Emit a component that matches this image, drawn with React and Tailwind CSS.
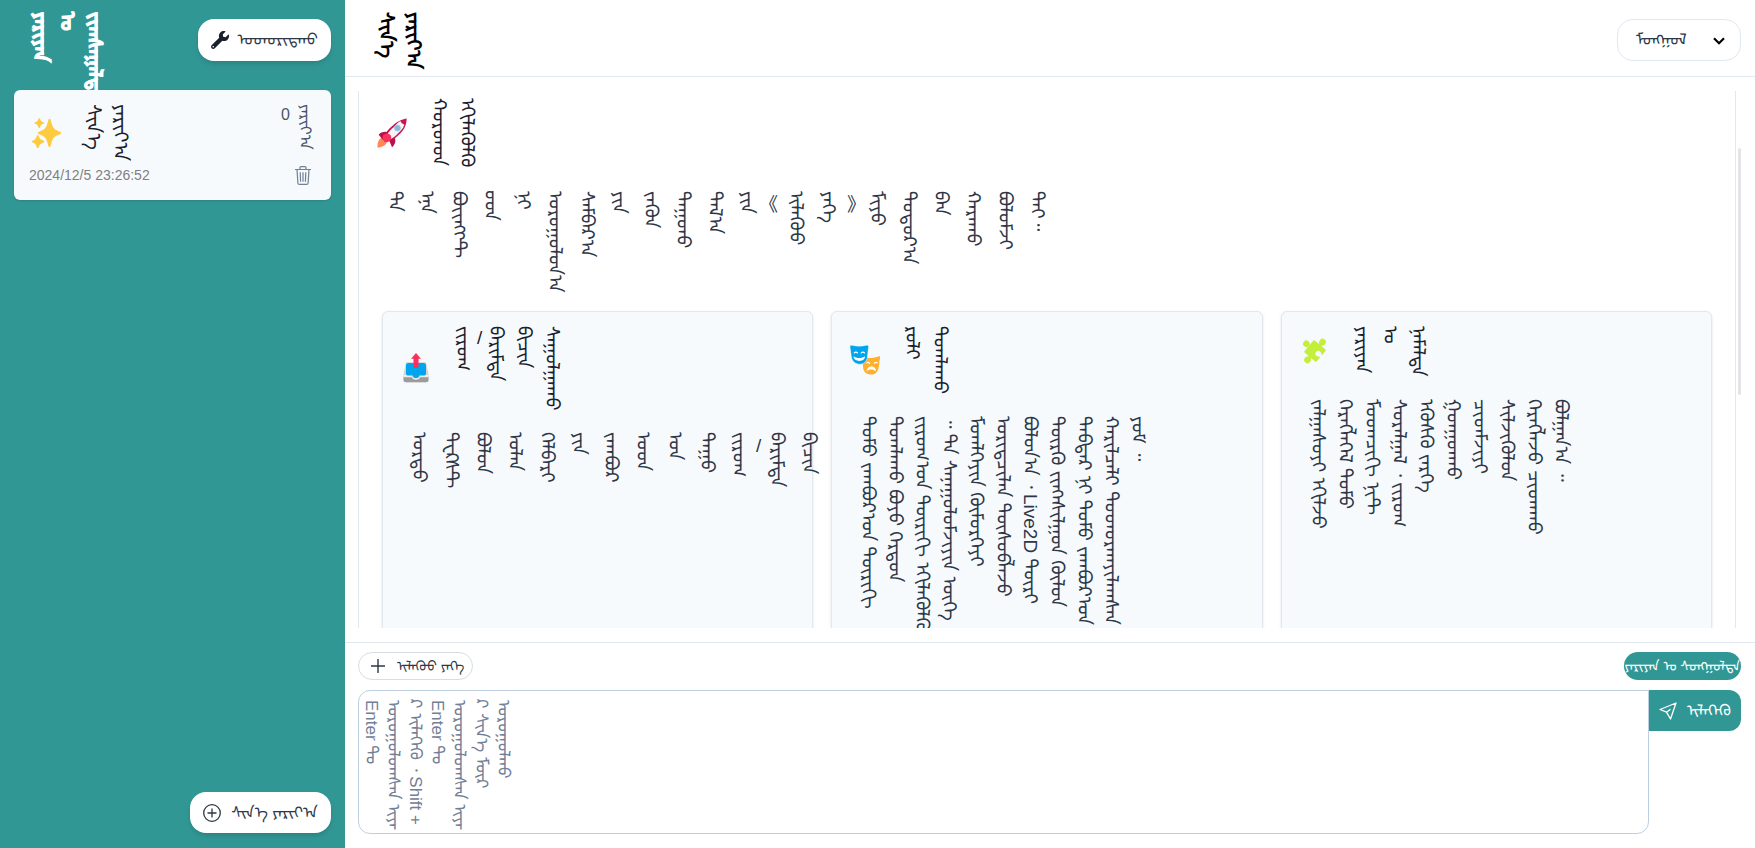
import React from "react";
import { FaWrench } from "react-icons/fa";

const VERTICAL = "[writing-mode:vertical-lr] whitespace-nowrap";

function wordClass(word) {
  if (/[\u1800-\u18af]/.test(word)) return VERTICAL;
  if (word === "《") return "flex w-3 justify-end";
  if (word === "》") return "flex w-3 justify-start";
  if (word === "/") return "-mx-[2px] font-normal";
  return "font-normal";
}

function Words({ text, gap = "gap-[5px]", className = "" }) {
  return (
    <span className={`flex items-start whitespace-nowrap ${gap} ${className}`}>
      {text.split(" ").map((word, i) => (
        <span key={i} className={wordClass(word)}>
          {word}
        </span>
      ))}
    </span>
  );
}

function Columns({ lines }) {
  return (
    <p className="text-[19px] leading-[27px] whitespace-pre [writing-mode:vertical-lr]">
      {lines.join("\n")}
    </p>
  );
}

function Sparkles() {
  return (
    <svg viewBox="0 0 36 36" className="size-[30px] shrink-0" fill="#fdcb3f" aria-hidden="true">
      <path d="M34.3 16.7c-8.7-3-9.3-5.2-11.2-11.9l-.8-2.9C22 1.200 21.600 1 21 1s-1 .3-1.200.9l-.8 2.900c-1.900 6.700-2.500 8.900-11.200 11.900-.500.200-.8.700-.8 1.200s.3 1 .8 1.200c8.700 3 9.300 5.200 11.200 12l.8 2.900c.2.600.6 1 1.200 1s1-.4 1.200-1l.8-2.900c1.900-6.800 2.500-9 11.200-12 .5-.2.8-.7.8-1.200s-.3-1-.7-1.300z" />
      <path d="M14 27.200c-4.200-1.600-4.700-2.300-6-6-.2-.5-.6-.8-1.100-.8s-.9.3-1.100.8c-1.300 3.700-1.700 4.500-5.100 6-.5.200-.7.600-.7 1.100s.3.900.7 1.100c3.400 1.400 3.800 2.200 5.100 5.900.2.500.6.700 1.100.7s.9-.3 1.100-.7c1.300-3.700 1.800-4.500 6-6 .5-.200.7-.6.7-1.100s-.3-.8-.7-1z" />
      <path d="M13.700 5.200c-2.900-1-3.200-1.700-4.100-4.300-.1-.4-.5-.6-.9-.6s-.8.200-.9.600c-.9 2.600-1.200 3.300-4.100 4.300-.4.100-.7.500-.7.900s.3.800.7.900c2.900 1 3.200 1.700 4.100 4.300.1.400.5.600.9.600s.8-.2.900-.6c.9-2.600 1.200-3.300 4.100-4.300.4-.1.700-.5.700-.9s-.3-.8-.7-.9z" />
    </svg>
  );
}

function Rocket() {
  return (
    <svg viewBox="0 0 36 36" className="size-[30px] shrink-0" aria-hidden="true">
      <path fill="#ff8a57" d="M.5 35.500s-.4-7 3-10.500S12 23 12 23s1 6-2 9-9.500 3.500-9.500 3.500z" />
      <path fill="#b7124a" d="M2 20c3-4 8-4 12-3l7 6c2 4 1 9-3 12l-3-7-8-2z" />
      <path fill="#c9164f" d="M35.500.5S36 9 30.500 15.500C25 22 17 29 10 28c-3-6 1-13 9-19C26 2 35.500.5 35.500.5z" />
      <path fill="#f7f2f8" d="M28 3.500c1 2 2.800 3.500 4.800 4.500-.8 2.500-2 4.600-3.600 6.500C24 20.500 18 26 12 26.500c-2-4 1.500-10.500 8-15.500 2.800-3 5-6 8-7.500z" />
      <path fill="#f8315f" d="M8 20c4-2 9-1 9 3 0 4-3 6-7 6-2 0-5-6-2-9z" />
      <circle fill="#83b9dc" cx="24.500" cy="12" r="3.600" stroke="#a9c9e2" strokeWidth="1" />
    </svg>
  );
}

function OutboxTray() {
  return (
    <svg viewBox="-2 0 34 36" className="size-[30px] shrink-0" aria-hidden="true">
      <path fill="#d3d3d3" d="M3 11h24l3 15v6a3 3 0 0 1-3 3H3a3 3 0 0 1-3-3v-6z" />
      <path fill="#9b9b9b" d="M0 28h30v4a3 3 0 0 1-3 3H3a3 3 0 0 1-3-3z" />
      <path fill="#e8edf0" d="M0 26h10c1 3 2 4 5 4s4-1 5-4h10v3H20c-1 2-2 3-5 3s-4-1-5-3H0z" />
      <path fill="#00a6ed" d="M6 12h18a3 3 0 0 1 3 3v10a2 2 0 0 1-2 2h-6c-1 2-2 3-4 3s-3-1-4-3H5a2 2 0 0 1-2-2V15a3 3 0 0 1 3-3z" />
      <path fill="#f8315f" d="M15 0l6 7h-3v10a1 1 0 0 1-1 1h-4a1 1 0 0 1-1-1V7H9z" />
    </svg>
  );
}

function Masks() {
  return (
    <svg viewBox="0 0 32 32" className="size-[30px] shrink-0" aria-hidden="true">
      <path fill="#ffb02e" d="M13 13c6 1.500 13 1 18-1 1 0 1.300.5 1 2-1 4-.5 8-2 12-1.500 4-5 6-9 5.500-4-.5-6.500-3-7-7z" />
      <path fill="none" stroke="#fff" strokeWidth="1.200" strokeLinecap="round" d="M18 19c1-.8 2-.6 3 .5M26 19.500c1-1 2-1.200 3-.6" />
      <path fill="#fff" d="M17.500 28c.5-4 3-5.500 6-5s4.500 2.500 4 5c-3-2.500-7-2.500-10 0z" />
      <path fill="#00a6ed" stroke="#f7fafc" strokeWidth=".5" d="M0 2C0 .5.500 0 2 .3c5 1.200 11 1.200 15.500 0C19 0 20 .5 19.800 2L18.500 13c-.5 4.500-4 7.500-8 7.500S2.500 18 1.500 13z" />
      <path fill="none" stroke="#fff" strokeWidth="1.200" strokeLinecap="round" d="M4.500 8.500c1-1.200 2.500-1.200 3.500 0M12 8.500c1-1.200 2.500-1.200 3.500 0" />
      <path fill="#fff" d="M3.500 12c4 2.500 9 2.500 12.500 0 0 3-2.500 5-6 5s-6-2-6.500-5z" />
    </svg>
  );
}

function Puzzle() {
  return (
    <svg viewBox="0 0 32 32" className="size-[30px] shrink-0" aria-hidden="true">
      <g transform="translate(16 16) rotate(40)" fill="#c3ef3c">
        <rect x="-8.500" y="-8.500" width="17" height="17" rx="1" />
        <rect x="-1.800" y="-12" width="3.600" height="24" />
        <circle cx="0" cy="-12.500" r="3.500" />
        <circle cx="0" cy="12.500" r="3.500" />
        <circle cx="-12" cy="0" r="3.500" />
        <g fill="#f7fafc">
          <circle cx="4.500" cy="0" r="3" />
          <rect x="5" y="-1.500" width="4" height="3" />
        </g>
      </g>
    </svg>
  );
}

function Trash() {
  return (
    <svg viewBox="0 0 16 19" className="h-[19px] w-4" fill="none" stroke="#718096" strokeWidth="1.200" aria-hidden="true">
      <path d="M0 3.500h16M5 3.300V1.600a1 1 0 0 1 1-1h4a1 1 0 0 1 1 1v1.700M2 3.600l.9 13.400a1.500 1.500 0 0 0 1.500 1.400h7.200a1.500 1.500 0 0 0 1.500-1.400L14 3.600M5.200 6.200l.4 9.600M8 6.200v9.600M10.800 6.200l-.4 9.600" />
    </svg>
  );
}

function Card({ icon, title, bodyClass, children }) {
  return (
    <section className="h-[520px] min-w-0 flex-1 rounded-md border border-[#e2e8f0] bg-[#f7fafc] px-[18px] pt-[14px] shadow-sm">
      <h3 className="flex items-center gap-5 text-[19px] leading-6 font-semibold text-[#1a202c]">
        {icon}
        <Words gap="gap-1" text={title} />
      </h3>
      <div className={bodyClass}>{children}</div>
    </section>
  );
}

export default function App() {
  return (
    <div className="flex h-screen overflow-hidden bg-white font-['Liberation_Sans','Noto_Sans_Mongolian','Mongolian_Baiti',sans-serif] text-[#2d3748]">
      <aside className="flex w-[345px] shrink-0 flex-col bg-[#319795] px-[14px]">
        <div className="flex h-[90px] items-start justify-between pl-[15px]">
          <h1 className="pt-3 text-xl leading-6 font-bold text-white [-webkit-text-stroke:1px_#fff]">
            <Words gap="gap-[3px]" text="ᠶᠠᠷᠢᠶᠠᠨ ᠤ ᠵᠢᠭᠰᠠᠭᠠᠯᠲᠠ" />
          </h1>
          <button className="mt-[19px] flex h-[42px] items-center gap-2 rounded-2xl bg-white px-[13px] text-base whitespace-nowrap shadow-md">
            <FaWrench className="size-[18px] text-[#1a202c]" aria-hidden="true" />
            ᠤᠤᠠᠤᠷᠢᠳ᠋ᠬᠤ
          </button>
        </div>
        <article className="relative flex h-[110px] flex-col rounded-md bg-[#f7fafc] pr-[15px] pl-[15px] shadow-sm">
          <div className="flex h-[75px] items-start justify-between pt-[14px]">
            <h2 className="flex items-center gap-5 pl-[3px] text-xl leading-6 font-semibold text-[#1a202c]">
              <Sparkles />
              <Words gap="gap-[3px]" text="ᠰᠢᠨ᠎ᠡ ᠶᠠᠷᠢᠶ᠎ᠠ" />
            </h2>
            <Words gap="gap-1" className="text-base leading-[22px] text-[#4a5568]" text="0 ᠶᠠᠷᠢᠶ᠎ᠠ" />
          </div>
          <div className="flex items-center justify-between pr-[5px] text-sm text-[#808080]">
            <time>2024/12/5 23:26:52</time>
            <button aria-label="ᠤᠰᠠᠳᠬᠠᠬᠤ"><Trash /></button>
          </div>
        </article>
        <div className="mt-auto mb-[15px] flex justify-end">
          <button className="flex h-[41px] items-center gap-[10px] rounded-2xl bg-white px-[13px] text-base whitespace-nowrap shadow-md">
            <svg viewBox="0 0 18 18" className="size-[18px]" fill="none" stroke="#2d3748" strokeWidth="1.300" aria-hidden="true">
              <circle cx="9" cy="9" r="8.300" />
              <path d="M9 4.500v9M4.500 9h9" />
            </svg>
            ᠰᠢᠨ᠎ᠡ ᠶᠠᠷᠢᠶ᠎ᠠ
          </button>
        </div>
      </aside>

      <main className="flex min-w-0 flex-1 flex-col">
        <header className="flex h-[77px] shrink-0 items-start justify-between border-b border-[#e2e8f0] pr-[14px] pl-[30px]">
          <h2 className="pt-3 text-xl leading-6 font-bold text-black">
            <Words gap="gap-[3px]" text="ᠰᠢᠨ᠎ᠡ ᠶᠠᠷᠢᠶ᠎ᠠ" />
          </h2>
          <div className="relative mt-[19px]">
            <select aria-label="ᠬᠡᠯᠡ" className="h-[42px] w-[124px] appearance-none rounded-2xl border border-[#e2e8f0] bg-white pl-[18px] text-base">
              <option>ᠮᠣᠩᠭᠣᠯ</option>
            </select>
            <svg viewBox="0 0 12 8" className="pointer-events-none absolute top-[18px] right-[16px] h-2 w-3" fill="none" stroke="#000" strokeWidth="2.200" aria-hidden="true">
              <path d="M1 1.200l5 5 5-5" />
            </svg>
          </div>
        </header>

        <div className="flex min-h-0 flex-1 justify-between pt-[14px] pr-[14px] pb-[14px] pl-[13px]">
          <div className="min-w-0 flex-1 overflow-hidden border-x border-[#e2e8f0] px-[23px]">
            <h2 className="-ml-[5px] flex h-[84px] items-start text-[19px] leading-6 font-semibold text-[#1a202c]">
              <span className="flex items-center gap-5 pt-[7px]">
                <Rocket />
                <Words gap="gap-1" text="ᠬᠤᠷᠤᠠᠤᠨ ᠡᠬᠢᠯᠡᠭᠦᠯᠬᠦ" />
              </span>
            </h2>
            <p className="h-[136px] pt-4 text-[19px] leading-[27px]">
              <Words text={"ᠲᠠ ᠡᠨᠡ ᠪᠦᠢᠩᠭᠲ \u200dᠤᠤᠨ ᠨᠢ ᠣᠷᠣᠭᠤᠯᠤᠨ᠎ᠠ ᠰᠠᠮᠪᠠᠷ᠎ᠠ ᠶᠢᠨ ᠵᠡᠭᠦᠨ ᠳᠡᠭᠤᠠᠤ ᠲᠠᠯ᠎ᠠ ᠶᠢᠨ 《 ᠢᠯᠡᠭᠦᠦ ᠶᠡᠬᠡ 》 ᠮᠢᠶᠤ ᠳᠣᠲᠣᠷ᠎ᠠ ᠪᠠᠨ ᠬᠠᠷᠠᠬᠤ ᠪᠣᠯᠤᠮᠵᠢ ᠲᠠᠢ᠃"} />
            </p>
            <div className="flex gap-[18px]">
              <Card icon={<OutboxTray />} title="ᠵᠢᠷᠤᠭ / ᠪᠠᠷᠢᠮᠲᠠ ᠪᠢᠴᠢᠨ ᠰᠠᠭᠤᠯᠭᠠᠬᠤ" bodyClass="pt-[22px] pl-[5px] text-[19px] leading-[27px]">
                <Words text="ᠣᠷᠳᠤ ᠲᠧᠺᠰᠲ ᠪᠣᠯᠤᠨ ᠣᠯᠠᠨ ᠬᠡᠯᠪᠡᠷᠢ ᠶᠢᠨ ᠵᠠᠭᠪᠤᠷ ᠤᠤᠨ ᠤᠨ ᠳᠠᠭᠤ ᠵᠢᠷᠤᠭ / ᠪᠠᠷᠢᠮᠲᠠ ᠪᠢᠴᠢᠨ" />
              </Card>
              <Card icon={<Masks />} title="ᠷᠣᠯᠢ ᠲᠣᠭᠯᠠᠬᠤ" bodyClass="pt-[22px] pl-[5px]">
                <Columns
                  lines={[
                    "ᠲᠣᠮᠤ ᠵᠠᠭᠪᠤᠷ\u200cᠤᠨ ᠳᠦᠷᠢᠭᠢ",
                    "ᠲᠣᠭᠯᠠᠬᠤ ᠪᠣᠶᠤ ᠬᠡᠷᠲᠦᠨ",
                    "ᠵᠢᠷᠤᠭ\u200cᠤᠨ ᠳᠦᠷᠢᠭᠢ ᠡᠬᠢᠯᠡᠭᠦᠯᠬᠦ",
                    "᠃ ᠲᠠ ᠰᠠᠨᠠᠭᠤᠯᠤᠮᠵᠢᠶᠢᠨ ᠦᠬᠡ ᠂",
                    "ᠮᠣᠭᠯᠬᠡᠶᠢᠨ ᠬᠦᠮᠦᠷᠭᠡᠶᠢ",
                    "ᠤᠷᠢᠳ᠋ᠴᠢᠯᠠᠨ ᠲᠥᠰᠥᠪᠯᠡᠵᠦ",
                    "ᠪᠣᠯᠤᠨ᠎ᠠ ᠂ Live2D ᠳᠦᠷᠢ",
                    "ᠳᠦᠷᠬᠦ ᠵᠢᠩᠠᠰᠢᠯᠭᠤᠨ ᠬᠦᠯᠦᠨ",
                    "ᠳᠡᠪᠳᠡᠷ ᠨᠢ ᠲᠣᠮᠤ ᠵᠠᠭᠪᠤᠷ\u200cᠤᠨ",
                    "ᠬᠠᠷᠢᠯᠴᠠᠯᠢ ᠲᠣᠤᠠᠤᠷᠬᠠᠶᠢᠯᠠᠭᠰᠠᠨ",
                    "ᠶᠤᠮ ᠃",
                  ]}
                />
              </Card>
              <Card icon={<Puzzle />} title="ᠶᠠᠷᠢᠶᠠᠨ ᠤ ᠨᠡᠮᠡᠯᠲᠡ" bodyClass="pt-[22px] pl-[5px]">
                <Columns
                  lines={[
                    "ᠵᠠᠯᠭᠠᠰᠤᠶᠢ ᠡᠬᠢᠯᠵᠦ",
                    "ᠬᠡᠷᠡᠭᠯᠡᠭᠡᠯ ᠲᠣᠮᠤ",
                    "ᠮᠣᠤᠠᠨᠴᠢᠭᠢ ᠨᠢᠲ",
                    "ᠰᠤᠷᠠᠯᠭᠠᠯ ᠂ ᠵᠢᠷᠤᠭ",
                    "ᠡᠭᠦᠰᠬᠦ ᠵᠡᠷᠭᠡ",
                    "ᠭᠤᠠᠭᠤᠠᠬᠤ",
                    "ᠴᠢᠤᠠᠮᠵᠢᠶᠢ",
                    "ᠰᠢᠯᠵᠢᠬᠦᠯᠦᠨ",
                    "ᠬᠡᠷᠡᠭᠯᠡᠵᠦ ᠴᠢᠤᠠᠠᠬᠤ",
                    "ᠪᠣᠯᠭᠠᠨ᠎ᠠ ᠃",
                  ]}
                />
              </Card>
            </div>
          </div>
          <div className="w-[5px] shrink-0 pt-[57px] pl-[2px]">
            <div className="h-[247px] w-[3px] rounded-full bg-[#e2e4e8]" />
          </div>
        </div>

        <footer className="h-[206px] shrink-0 border-t border-[#e2e8f0] pr-[14px] pl-[13px]">
          <div className="flex items-center justify-between pt-[9px] pb-[10px]">
            <button className="flex h-7 items-center gap-3 rounded-full border border-[#d9dde3] pr-2 pl-3 text-sm whitespace-nowrap">
              <svg viewBox="0 0 14 14" className="size-[14px]" stroke="#2d3748" strokeWidth="1.400" aria-hidden="true">
                <path d="M7 0v14M0 7h14" />
              </svg>
              ᠢᠯᠡᠭᠦᠦ ᠶᠡᠬᠡ
            </button>
            <button className="flex h-7 w-[117px] items-center justify-center overflow-hidden rounded-full bg-[#319795] text-sm whitespace-nowrap text-white">
              ᠶᠠᠷᠢᠶᠠᠨ ᠤ ᠰᠣᠩᠭᠤᠯᠲᠠ
            </button>
          </div>
          <div className="flex items-start">
            <textarea
              aria-label="ᠣᠷᠣᠭᠤᠯᠬᠤ"
              className="h-[144px] min-w-0 flex-1 resize-none overflow-hidden rounded-xl rounded-tr-none border border-[#bcd0e2] pt-[9px] pl-px text-[17px] leading-[22px] [writing-mode:vertical-lr] placeholder:text-[#718096]"
              placeholder={"Enter ᠲᠤ\nᠣᠷᠣᠭᠤᠯᠤᠭᠰᠠᠨ ᠢᠶᠠ\u200d\n\u200dᠷ ᠢᠯᠡᠭᠡᠬᠦ ᠂ Shift +\nEnter ᠲᠤ\nᠣᠷᠣᠭᠤᠯᠤᠭᠰᠠᠨ ᠢᠶᠠ\u200d\n\u200dᠷ ᠰᠢᠨ᠎ᠡ ᠮᠥᠷ\nᠣᠷᠣᠭᠤᠯᠬᠤ"}
            />
            <button className="flex h-[41px] w-[92px] items-center justify-center gap-[10px] rounded-r-xl bg-[#319795] text-base whitespace-nowrap text-white">
              <svg viewBox="0 0 18 18" className="size-[18px]" fill="none" stroke="#fff" strokeWidth="1.300" strokeLinejoin="round" aria-hidden="true">
                <path d="M17 1L1 7.500l6.500 2.700L11.500 17zM7.500 10.200l4-3" />
              </svg>
              ᠢᠯᠡᠭᠡᠬᠦ
            </button>
          </div>
        </footer>
      </main>
    </div>
  );
}
